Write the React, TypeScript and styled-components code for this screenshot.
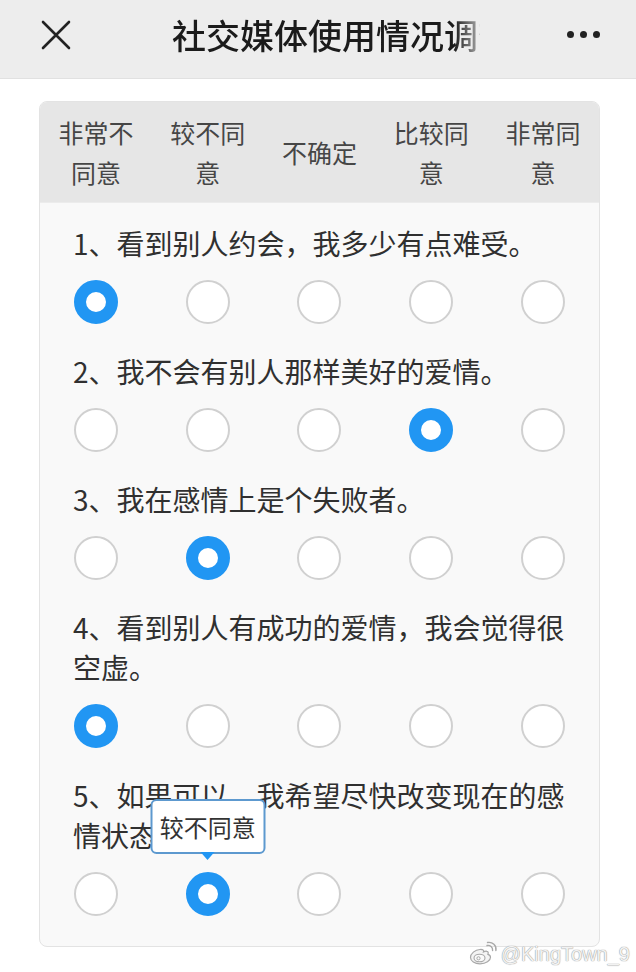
import React from "react";
import styled, { createGlobalStyle } from "styled-components";

const Global = createGlobalStyle`
  html, body { margin: 0; padding: 0; background: #ffffff; }
  body { font-family: "Noto Sans CJK SC", "Noto Sans", sans-serif; }
`;

const Page = styled.div`
  position: relative;
  width: 636px;
  height: 972px;
  background: #ffffff;
  overflow: hidden;
`;

const TopBar = styled.header`
  box-sizing: border-box;
  height: 79px;
  background: #ededed;
  border-bottom: 1px solid #e1e1e1;
  display: flex;
  align-items: center;
  padding: 0 36px 9px 41px;
`;

const IconButton = styled.button`
  border: 0;
  background: transparent;
  padding: 0;
  display: flex;
  align-items: center;
  justify-content: center;
  color: #222;
`;

const Title = styled.h1`
  margin: 0 0 0 101px;
  width: 308px;
  font-size: 34px;
  font-weight: 500;
  color: #1b1b1b;
  white-space: nowrap;
  overflow: hidden;
  line-height: 44px;
  -webkit-mask-image: linear-gradient(to right, #000 calc(100% - 26px), rgba(0, 0, 0, 0.3) 100%);
  mask-image: linear-gradient(to right, #000 calc(100% - 26px), rgba(0, 0, 0, 0.3) 100%);
`;

const More = styled(IconButton)`
  margin-left: auto;
  gap: 6px;
`;

const Dot = styled.span`
  width: 7px;
  height: 7px;
  border-radius: 50%;
  background: #222;
`;

const Content = styled.main`
  padding: 22px 36px 0 39px;
`;

const Card = styled.section`
  box-sizing: border-box;
  height: 846px;
  border: 1px solid #e3e3e3;
  border-radius: 8px;
  background: #f9f9f9;
  overflow: hidden;
`;

const ScaleHeader = styled.div`
  display: grid;
  grid-template-columns: repeat(5, 1fr);
  background: #e6e6e6;
  height: 100px;
  border-bottom: 1px solid #ececec;
`;

const ScaleLabel = styled.div`
  display: flex;
  align-items: center;
  justify-content: center;
  text-align: center;
  padding: 0 8px;
  font-size: 25px;
  line-height: 40px;
  color: #464646;
`;

const Questions = styled.div`
  padding: 20px 0 0;
`;

const Question = styled.div`
  margin-bottom: 27px;
`;

const QuestionText = styled.p`
  margin: 0 0 17px;
  padding: 0 32px 0 33px;
  font-size: 28px;
  line-height: 40px;
  color: #303030;
`;

const Options = styled.div`
  display: grid;
  grid-template-columns: repeat(5, 1fr);
  justify-items: center;
`;

const OptionCell = styled.div`
  position: relative;
  display: flex;
  justify-content: center;
`;

const Radio = styled.span<{ $checked?: boolean }>`
  display: block;
  box-sizing: border-box;
  width: 44px;
  height: 44px;
  border-radius: 50%;
  background: #fff;
  border: ${(p) => (p.$checked ? "12px solid #2196f3" : "2px solid #d0d0d0")};
`;

const Tooltip = styled.div`
  position: absolute;
  bottom: calc(100% + 18px);
  left: 50%;
  transform: translateX(-50%);
  box-sizing: border-box;
  width: 115px;
  height: 55px;
  background: #fff;
  border: 2px solid #5d99cf;
  border-radius: 6px;
  display: flex;
  align-items: center;
  justify-content: center;
  font-size: 24px;
  color: #333;
  white-space: nowrap;
  &::after {
    content: "";
    position: absolute;
    left: 50%;
    top: 100%;
    transform: translateX(-50%);
    border-left: 7px solid transparent;
    border-right: 7px solid transparent;
    border-top: 8px solid #2196f3;
  }
`;

const Watermark = styled.div`
  position: absolute;
  right: 6px;
  bottom: 5px;
  display: flex;
  align-items: center;
  gap: 3px;
  font-family: "Liberation Sans", Arial, sans-serif;
  font-size: 20px;
  color: #f2f2f2;
  text-shadow: 0 0 1px #9a9a9a, 0 0 1px #9a9a9a;
`;

const labels = ["非常不同意", "较不同意", "不确定", "比较同意", "非常同意"];

const questions: { text: string; answer: number; tip?: boolean }[] = [
  { text: "1、看到别人约会，我多少有点难受。", answer: 0 },
  { text: "2、我不会有别人那样美好的爱情。", answer: 3 },
  { text: "3、我在感情上是个失败者。", answer: 1 },
  { text: "4、看到别人有成功的爱情，我会觉得很空虚。", answer: 0 },
  { text: "5、如果可以，我希望尽快改变现在的感情状态。", answer: 1, tip: true },
];

const WeiboLogo = () => (
  <svg width="30" height="26" viewBox="0 0 30 26" fill="none">
    <path
      d="M12 8.5c-5 .3-9.5 4-9.5 8 0 3.6 4.3 6.3 9.5 6.3 6 0 10.5-3 10.5-6.6 0-1.8-1.5-2.6-2.6-2.9.6-1.4.5-2.7-1-3-1.3-.3-3 .4-3.4.6.4-1.2.2-2.7-3.5-2.4z"
      fill="#f4f4f4"
      stroke="#a8a8a8"
      strokeWidth="1.2"
    />
    <ellipse cx="11.5" cy="17" rx="5.5" ry="3.8" stroke="#a8a8a8" strokeWidth="1.1" fill="#fafafa" />
    <circle cx="10.5" cy="17.3" r="1.6" stroke="#a8a8a8" strokeWidth="1" />
    <path d="M19 4.5c3-.6 6 1.6 5.6 5" stroke="#a8a8a8" strokeWidth="1.4" strokeLinecap="round" />
    <path d="M19.5 1.5c5-.9 9.3 3 8.4 8" stroke="#a8a8a8" strokeWidth="1.4" strokeLinecap="round" />
  </svg>
);

export default function App() {
  return (
    <Page>
      <Global />
      <TopBar>
        <IconButton aria-label="关闭">
          <svg width="30" height="30" viewBox="0 0 30 30">
            <path d="M2 2L28 28M28 2L2 28" stroke="#222" strokeWidth="2.6" strokeLinecap="round" />
          </svg>
        </IconButton>
        <Title>社交媒体使用情况调查</Title>
        <More aria-label="更多">
          <Dot />
          <Dot />
          <Dot />
        </More>
      </TopBar>
      <Content>
        <Card>
          <ScaleHeader>
            {labels.map((l) => (
              <ScaleLabel key={l}>{l}</ScaleLabel>
            ))}
          </ScaleHeader>
          <Questions>
            {questions.map((q) => (
              <Question key={q.text}>
                <QuestionText>{q.text}</QuestionText>
                <Options>
                  {labels.map((l, i) => (
                    <OptionCell key={l}>
                      {q.tip && i === q.answer && <Tooltip>{l}</Tooltip>}
                      <Radio $checked={i === q.answer} />
                    </OptionCell>
                  ))}
                </Options>
              </Question>
            ))}
          </Questions>
        </Card>
      </Content>
      <Watermark>
        <WeiboLogo />
        <span>@KingTown_9</span>
      </Watermark>
    </Page>
  );
}
